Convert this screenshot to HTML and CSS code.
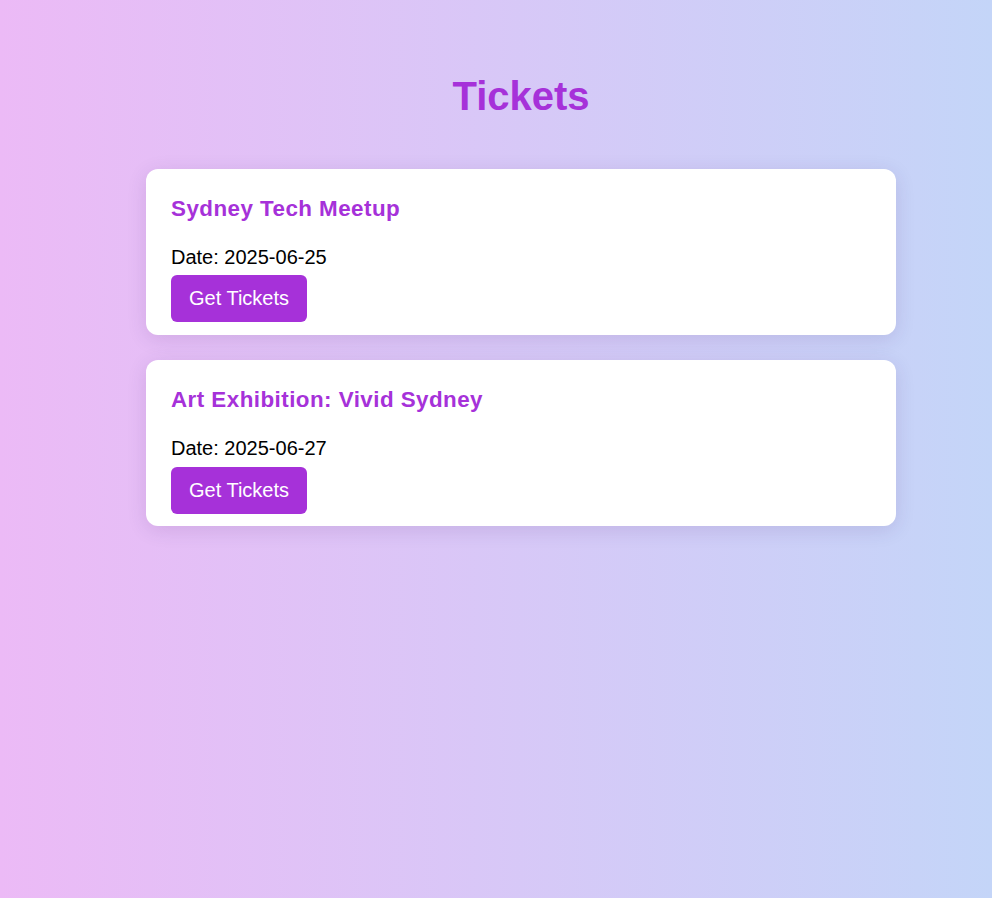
FILE: index.html
```html
<!DOCTYPE html>
<html lang="en">
<head>
<meta charset="utf-8">
<title>Tickets</title>
<link rel="stylesheet" href="styles.css">
</head>
<body>
<main class="page">
  <h1 class="title">Tickets</h1>
  <section class="list">
    <article class="card">
      <h2 class="card-title">Sydney Tech Meetup</h2>
      <p class="card-date">Date: 2025-06-25</p>
      <button class="btn">Get Tickets</button>
    </article>
    <article class="card">
      <h2 class="card-title">Art Exhibition: Vivid Sydney</h2>
      <p class="card-date">Date: 2025-06-27</p>
      <button class="btn">Get Tickets</button>
    </article>
  </section>
</main>
</body>
</html>
```
FILE: styles.css
```css
html, body {
  margin: 0;
  padding: 0;
}
body {
  min-height: 100vh;
  background: linear-gradient(to right, #ecbaf6, #c4d5f8);
  font-family: "Liberation Sans", Arial, sans-serif;
  color: #000;
}
.page {
  padding: 73px 0 40px 50px;
  box-sizing: border-box;
}
.title {
  margin: 0 0 50px;
  text-align: center;
  font-size: 40px;
  line-height: 46px;
  font-weight: bold;
  color: #a631d9;
}
.list {
  width: 750px;
  margin: 0 auto;
  display: flex;
  flex-direction: column;
  gap: 25.5px;
}
.card {
  background: #fff;
  border-radius: 12px;
  padding: 26.5px 25px 12.5px;
  box-shadow: 0 4px 20px rgba(60, 20, 100, 0.12);
}
.card-title {
  margin: 0 0 24.5px;
  font-size: 22.4px;
  line-height: 25.76px;
  letter-spacing: 0.45px;
  font-weight: bold;
  color: #a631d9;
}
.card-date {
  margin: 0 0 6.5px;
  font-size: 20px;
  line-height: 23px;
}
.btn {
  display: block;
  font-family: "Liberation Sans", Arial, sans-serif;
  font-size: 20px;
  line-height: 23px;
  padding: 12px 18px;
  border: none;
  border-radius: 6px;
  background: #a631d9;
  color: #fff;
  cursor: pointer;
}
```
